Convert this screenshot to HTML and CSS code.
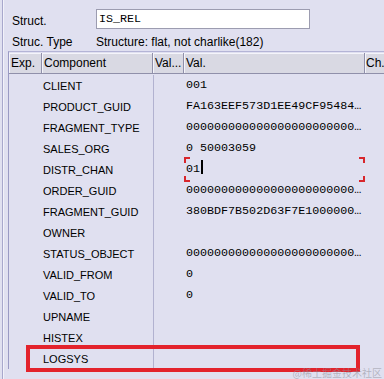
FILE: index.html
```html
<!DOCTYPE html>
<html lang="en">
<head>
    <meta charset="UTF-8">
    <meta name="viewport" content="width=device-width, initial-scale=1.0">
    <title>Structure Editor</title>
    <link rel="stylesheet" href="styles.css">
</head>
<body>
    <div class="screen">
        <div class="frame">
            <div class="head">
                <div class="field-row">
                    <span class="label">Struct.</span>
                    <div class="input">IS_REL</div>
                </div>
                <div class="type-row">
                    <span class="label">Struc. Type</span>
                    <span>Structure: flat, not charlike(182)</span>
                </div>
            </div>

            <div class="table">
                <div class="row header">
                    <div class="hcell">Exp.</div>
                    <div class="hcell">Component</div>
                    <div class="hcell">Val...</div>
                    <div class="hcell">Val.</div>
                    <div class="hcell last">Ch.</div>
                </div>
                <div class="row"><div></div><div class="comp">CLIENT</div><div class="sep"></div><div class="val">001</div><div></div></div>
                <div class="row"><div></div><div class="comp">PRODUCT_GUID</div><div class="sep"></div><div class="val">FA163EEF573D1EE49CF95484…</div><div></div></div>
                <div class="row"><div></div><div class="comp">FRAGMENT_TYPE</div><div class="sep"></div><div class="val">000000000000000000000000…</div><div></div></div>
                <div class="row"><div></div><div class="comp">SALES_ORG</div><div class="sep"></div><div class="val">0 50003059</div><div></div></div>
                <div class="row"><div></div><div class="comp">DISTR_CHAN</div><div class="sep"></div><div class="val focus">01<span class="caret"></span></div><div></div></div>
                <div class="row"><div></div><div class="comp">ORDER_GUID</div><div class="sep"></div><div class="val">000000000000000000000000…</div><div></div></div>
                <div class="row"><div></div><div class="comp">FRAGMENT_GUID</div><div class="sep"></div><div class="val">380BDF7B502D63F7E1000000…</div><div></div></div>
                <div class="row"><div></div><div class="comp">OWNER</div><div class="sep"></div><div class="val"></div><div></div></div>
                <div class="row"><div></div><div class="comp">STATUS_OBJECT</div><div class="sep"></div><div class="val">000000000000000000000000…</div><div></div></div>
                <div class="row"><div></div><div class="comp">VALID_FROM</div><div class="sep"></div><div class="val">0</div><div></div></div>
                <div class="row"><div></div><div class="comp">VALID_TO</div><div class="sep"></div><div class="val">0</div><div></div></div>
                <div class="row"><div></div><div class="comp">UPNAME</div><div class="sep"></div><div class="val"></div><div></div></div>
                <div class="row"><div></div><div class="comp">HISTEX</div><div class="sep"></div><div class="val"></div><div></div></div>
                <div class="row"><div></div><div class="comp">LOGSYS</div><div class="sep"></div><div class="val"></div><div></div></div>
            </div>
        </div>

        <!-- annotation box drawn over the LOGSYS row -->
        <div class="highlight"></div>
        <div class="watermark">@稀土掘金技术社区</div>
    </div>
</body>
</html>
```

FILE: styles.css
```css
:root {
    --bg: #e0e0f0;
    --line: #a8a8cc;
    --mark: #e3232c;
    --mono: "Liberation Mono", "DejaVu Sans Mono", monospace;
}

body {
    margin: 0;
    background: var(--bg);
    font-family: "Liberation Sans", Arial, sans-serif;
    font-size: 12px;
    color: #000;
}

.screen {
    position: relative;
    height: 379px;
    overflow: hidden;
}

.frame {
    margin-left: 2px;
    height: 100%;
    border-left: 1px solid var(--line);
    box-shadow: inset 1px 0 0 #f2f2fa;
}

.head {
    padding: 9px 0 0 9px;
}

.field-row,
.type-row {
    display: flex;
    align-items: center;
}

.field-row {
    height: 20px;
}

.type-row {
    height: 19px;
    margin-top: 3px;
}

.label {
    width: 84px;
    flex: none;
}

.field-row .label {
    padding-top: 4px;
}

.input {
    box-sizing: border-box;
    width: 214px;
    height: 20px;
    padding: 1px 0 0 2px;
    background: #fff;
    border: 1px solid #9c9cb0;
    font-family: var(--mono);
    font-size: 11.7px;
    line-height: 17px;
}

.table {
    margin-left: 5px;
    border-left: 1px solid #9a9ac4;
    border-top: 1px solid #b4b4d6;
    padding-top: 1px;
}

.row {
    display: grid;
    grid-template-columns: 33px 111px 31px 181px 1fr;
    height: 21px;
    align-items: center;
    font-size: 11px;
}

.row.header {
    height: 21px;
    margin-bottom: 1px;
    font-size: 12px;
    align-items: stretch;
}

.hcell {
    box-sizing: border-box;
    padding: 3px 0 0 2px;
    background: #d9d9e3;
    border-right: 1px solid #9090aa;
    border-bottom: 1px solid #9090aa;
    box-shadow: inset 1px 1px 0 #f4f4fa;
    white-space: nowrap;
    overflow: hidden;
}

.hcell.last {
    padding-left: 1px;
    border-right: 0;
}

.comp {
    padding-left: 1px;
    white-space: nowrap;
}

.sep {
    height: 100%;
    border-left: 1px solid #b2b2d0;
}

.val {
    position: relative;
    height: 100%;
    padding-left: 2px;
    font-family: var(--mono);
    font-size: 11.7px;
    line-height: 21px;
    white-space: nowrap;
}

.focus {
    --c: #d8262c;
    background:
        linear-gradient(var(--c), var(--c)) 0 0 / 6px 2px no-repeat,
        linear-gradient(var(--c), var(--c)) 0 0 / 2px 6px no-repeat,
        linear-gradient(var(--c), var(--c)) 100% 0 / 6px 2px no-repeat,
        linear-gradient(var(--c), var(--c)) 100% 0 / 2px 6px no-repeat,
        linear-gradient(var(--c), var(--c)) 0 100% / 6px 2px no-repeat,
        linear-gradient(var(--c), var(--c)) 0 100% / 2px 6px no-repeat,
        linear-gradient(var(--c), var(--c)) 100% 100% / 6px 2px no-repeat,
        linear-gradient(var(--c), var(--c)) 100% 100% / 2px 6px no-repeat;
    margin: -2px 0 -1px;
    height: calc(100% + 3px);
    line-height: 25px;
}

.caret {
    display: inline-block;
    width: 2px;
    height: 14px;
    margin-left: 1px;
    background: #000;
    vertical-align: -2px;
}

.highlight {
    position: absolute;
    left: 26px;
    top: 345px;
    width: 334px;
    height: 27px;
    box-sizing: border-box;
    border: 4px solid var(--mark);
}

.watermark {
    position: absolute;
    right: 2px;
    bottom: 0;
    font-family: "Noto Sans CJK SC", sans-serif;
    font-size: 10px;
    line-height: 12px;
    color: rgba(140, 140, 150, 0.55);
}
```
